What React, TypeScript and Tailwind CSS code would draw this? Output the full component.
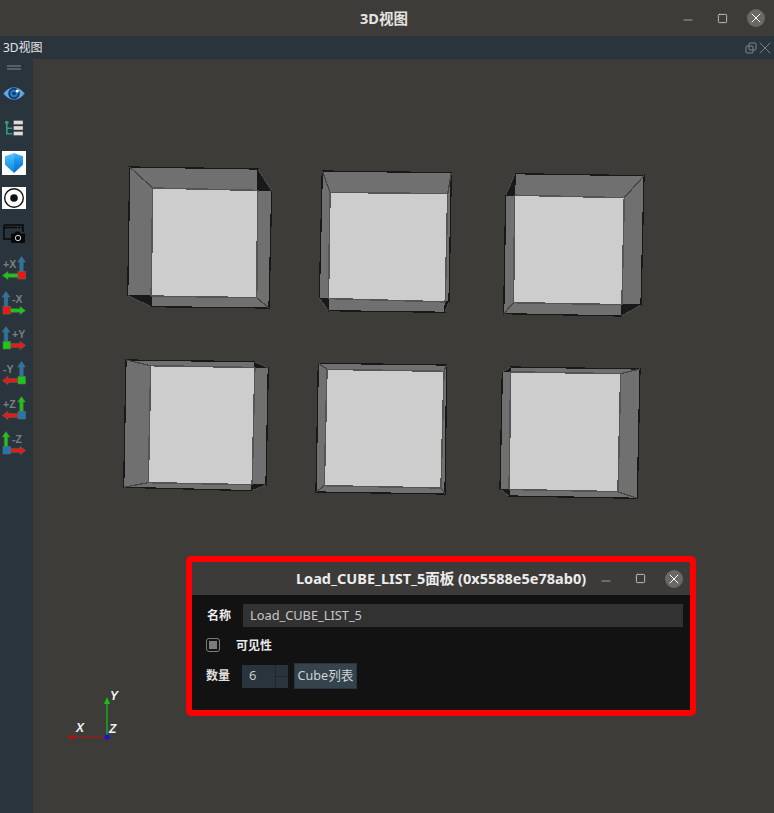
import { Minus, Square, X } from 'lucide-react';

type Pt = [number, number];

const cubes: { a: Pt[]; b: Pt[] }[] = [
  {
    a: [[129.7, 167], [258, 169], [256.7, 297.7], [127.7, 295.7]],
    b: [[152.7, 188], [271.7, 190.7], [269, 308], [151, 306.7]],
  },
  {
    a: [[322.3, 171], [451.3, 172.7], [449, 302], [319.3, 298.3]],
    b: [[330, 192.3], [447.7, 193.7], [445, 312.3], [328.3, 310.7]],
  },
  {
    a: [[515, 173.7], [644, 175.7], [641, 305], [513.5, 302.7]],
    b: [[505.7, 195], [624.3, 197.7], [621.7, 316], [503.7, 313.7]],
  },
  {
    a: [[126, 360], [255, 361.7], [252, 490.7], [123.7, 487.3]],
    b: [[150.7, 365.7], [268.3, 367.7], [266, 485], [148.3, 482.7]],
  },
  {
    a: [[318.3, 363.3], [446.7, 365], [445, 494], [316, 492]],
    b: [[327, 369.3], [444, 371.3], [441, 488], [324.3, 485.7]],
  },
  {
    a: [[510.7, 367], [640, 369], [637.3, 498.3], [509, 496]],
    b: [[502.3, 371.7], [620.7, 373.7], [618, 491.7], [500, 489.3]],
  },
];

const pts = (p: Pt[]) => p.map((q) => q.join(',')).join(' ');

const Cube = ({ a, b, id }: { a: Pt[]; b: Pt[]; id: number }) => (
  <g shapeRendering="crispEdges">
    <defs>
      <clipPath id={`clip-a-${id}`}>
        <polygon points={pts(a)} />
      </clipPath>
      <clipPath id={`clip-b-${id}`}>
        <polygon points={pts(b)} />
      </clipPath>
    </defs>
    {a.map((_, i) => {
      const j = (i + 1) % 4;
      return <polygon key={i} points={pts([a[i], a[j], b[j], b[i]])} fill="#191919" stroke="#191919" />;
    })}
    <polygon points={pts(a)} fill="#707070" />
    <polygon points={pts(b)} fill="#707070" />
    <polygon points={pts(a)} fill="none" stroke="#181818" strokeWidth="1.3" />
    <polygon points={pts(b)} fill="none" stroke="#181818" strokeWidth="1.3" />
    {a.map((q, i) => (
      <line key={i} x1={q[0]} y1={q[1]} x2={b[i][0]} y2={b[i][1]} stroke="#454545" strokeWidth="1.3" />
    ))}
    <polygon points={pts(a)} fill="#cdcdcd" clipPath={`url(#clip-b-${id})`} />
    <polygon points={pts(a)} fill="none" stroke="#555555" strokeWidth="1.5" clipPath={`url(#clip-b-${id})`} />
    <polygon points={pts(b)} fill="none" stroke="#555555" strokeWidth="1.5" clipPath={`url(#clip-a-${id})`} />
  </g>
);

const Scene = () => (
  <svg className="absolute left-0 top-0" width="741" height="754" viewBox="33 59 741 754">
    {cubes.map((c, i) => (
      <Cube key={i} a={c.a} b={c.b} id={i} />
    ))}
    <line x1="107" y1="737" x2="74" y2="737" stroke="#b01818" strokeWidth="1.2" />
    <polygon points="67,737 74,734 74,740" fill="#b01010" />
    <line x1="107" y1="737" x2="107" y2="704" stroke="#12c412" strokeWidth="1.2" />
    <polygon points="107,697 104,704 110,704" fill="#12c412" />
    <circle cx="107" cy="737" r="2.5" fill="#1414e0" />
    <g fill="#f2f2f2" fontSize="12" fontWeight="bold" fontStyle="italic" fontFamily="'Liberation Sans', sans-serif">
      <text x="76" y="732">X</text>
      <text x="110" y="700">Y</text>
      <text x="109" y="733">Z</text>
    </g>
  </svg>
);

const colors = { red: '#f01515', green: '#14cc14', blue: '#1f78b4' };

// mirror: square on the right and label on the left
const AxisIcon = ({
  label,
  up,
  side,
  box,
  right,
}: {
  label: string;
  up: string;
  side: string;
  box: string;
  right?: boolean;
}) => {
  const cx = right ? 6 : 21.5;
  const sq = right ? 3 : 18;
  const tip = right ? 25.5 : 2.5;
  const neck = right ? 20 : 8;
  const start = right ? 10 : 18;
  return (
    <svg width="28" height="24" viewBox="0 0 28 24">
      <g stroke="#6b6a55" strokeWidth="0.6">
        <polygon
          points={`${cx - 1.7},16 ${cx - 1.7},6 ${cx - 3.8},6 ${cx},0.5 ${cx + 3.8},6 ${cx + 1.7},6 ${cx + 1.7},16`}
          fill={up}
        />
        <polygon
          points={`${start},17.7 ${neck},17.7 ${neck},15.4 ${tip},19.5 ${neck},23.6 ${neck},21.3 ${start},21.3`}
          fill={side}
        />
        <rect x={sq} y="15.5" width="7.5" height="7.5" fill={box} />
      </g>
      <text
        x={right ? 12 : 3}
        y="12"
        fill="#7c8083"
        fontSize="10.5"
        fontWeight="bold"
        fontFamily="'Liberation Sans', sans-serif"
      >
        {label}
      </text>
    </svg>
  );
};

const EyeIcon = () => (
  <svg width="28" height="16" viewBox="0 0 28 16">
    <path d="M3 8.5C7 3.5 10.5 2 14 2s7 1.5 11 6.5C21 13.5 17.5 15 14 15S7 13.5 3 8.5Z" fill="#6aa6d8" stroke="#12304a" strokeWidth="0.8" />
    <circle cx="14" cy="8.5" r="5.8" fill="#123f73" />
    <circle cx="14" cy="8.5" r="3.8" fill="#2a7cc8" />
    <circle cx="14" cy="8.5" r="1.8" fill="#143a66" />
    <circle cx="17.3" cy="6" r="1.6" fill="#ffffff" />
  </svg>
);

const TreeIcon = () => (
  <svg width="28" height="18" viewBox="0 0 28 18">
    <circle cx="6.8" cy="3.6" r="1.9" fill="#2f9d84" />
    <path d="M6.8 4v10.8h5.4M6.8 9.3h5.4" fill="none" stroke="#2f9d84" strokeWidth="1.6" />
    <g fill="#dcdcdc" stroke="#3c4348" strokeWidth="0.4">
      <rect x="13.5" y="1.5" width="9.5" height="4" />
      <rect x="13.5" y="7" width="9.5" height="4" />
      <rect x="13.5" y="12.5" width="9.5" height="4" />
    </g>
  </svg>
);

const ShieldIcon = () => (
  <svg width="24" height="24" viewBox="0 0 24 24" className="bg-white">
    <defs>
      <linearGradient id="shield-left" x1="0" y1="0" x2="0" y2="1">
        <stop offset="0" stopColor="#6cc6f7" />
        <stop offset="0.35" stopColor="#35aef3" />
        <stop offset="1" stopColor="#0c86e2" />
      </linearGradient>
      <linearGradient id="shield-right" x1="0" y1="0" x2="0" y2="1">
        <stop offset="0" stopColor="#55b8f4" />
        <stop offset="0.35" stopColor="#1c98ea" />
        <stop offset="1" stopColor="#0a6cc4" />
      </linearGradient>
    </defs>
    <polygon points="3,5.3 12,2 12,22 3,13.7" fill="url(#shield-left)" />
    <polygon points="21,5.3 12,2 12,22 21,13.7" fill="url(#shield-right)" />
  </svg>
);

const TargetIcon = () => (
  <svg width="24" height="22" viewBox="0 0 24 22" className="bg-white">
    <circle cx="12" cy="11" r="9.3" fill="none" stroke="#111111" strokeWidth="1.4" />
    <circle cx="12" cy="11" r="3.8" fill="#111111" />
  </svg>
);

const CameraIcon = () => (
  <svg width="28" height="20" viewBox="0 0 28 20">
    <path d="M4 2h19v7M4 2v14h7" fill="none" stroke="#0a0a0a" strokeWidth="1.6" />
    <path d="M4 4.5h19" stroke="#0a0a0a" strokeWidth="1.6" strokeDasharray="13 1 2 1 2 1" />
    <path d="M11 10.5h3.5l1-2h4l1 2H25V20H11Z" fill="#0a0a0a" />
    <circle cx="18" cy="15" r="2.7" fill="none" stroke="#d0d0d0" strokeWidth="1" />
  </svg>
);

const toolbar = [
  <EyeIcon key="eye" />,
  <TreeIcon key="tree" />,
  <ShieldIcon key="shield" />,
  <TargetIcon key="target" />,
  <CameraIcon key="camera" />,
  <AxisIcon key="+x" label="+X" up={colors.blue} side={colors.green} box={colors.red} />,
  <AxisIcon key="-x" label="-X" up={colors.blue} side={colors.green} box={colors.red} right />,
  <AxisIcon key="+y" label="+Y" up={colors.blue} side={colors.red} box={colors.green} right />,
  <AxisIcon key="-y" label="-Y" up={colors.blue} side={colors.red} box={colors.green} />,
  <AxisIcon key="+z" label="+Z" up={colors.green} side={colors.red} box={colors.blue} />,
  <AxisIcon key="-z" label="-Z" up={colors.green} side={colors.red} box={colors.blue} right />,
];

const WindowButtons = () => (
  <>
    <div className="flex w-[34px] justify-center">
      <Minus className="mt-[4px] h-[14px] w-[14px] text-[#b5b3b0]" strokeWidth={1.4} />
    </div>
    <div className="flex w-[34px] justify-center">
      <Square className="h-[11px] w-[11px] text-[#c9c7c4]" strokeWidth={2} />
    </div>
    <div className="flex w-[34px] justify-center">
      <div className="flex h-[18px] w-[18px] items-center justify-center rounded-full bg-[#6a6865]">
        <X className="h-[16px] w-[16px] text-white" strokeWidth={1.5} />
      </div>
    </div>
  </>
);

const Panel = () => (
  <div className="absolute left-[153px] top-[497px] h-[160px] w-[510px] overflow-hidden rounded-[5px] border-[6px] border-[#ff0000] bg-[#121212]">
    <div className="relative -mr-px flex h-[33px] items-center justify-end bg-[#3d3b39]">
      <span className="absolute left-[104px] top-[7px] text-[14.5px] font-bold leading-[18px] text-[#ececec]">
        Load_CUBE_LIST_5面板 (0x5588e5e78ab0)
      </span>
      <WindowButtons />
    </div>
    <div className="flex flex-col gap-[11px] pl-[14px] pr-[7px] pt-[9px] text-[#d4d4d4]">
      <div className="flex h-[23px] items-center">
        <span className="w-[37px] pl-px text-[12px] font-bold text-[#eeeeee]">名称</span>
        <div className="flex h-[23px] flex-1 items-center bg-[#323232] pl-[7px] text-[12.8px] text-[#c8c8c8]">
          Load_CUBE_LIST_5
        </div>
      </div>
      <div className="flex h-[14px] items-center">
        <div className="flex h-[14px] w-[14px] items-center justify-center rounded-[3px] border border-[#7c7c7c]">
          <div className="h-[8px] w-[8px] bg-[#7c7c7c]" />
        </div>
        <span className="ml-[16px] pt-px text-[12px] font-bold text-[#e8e8e8]">可见性</span>
      </div>
      <div className="flex h-[26px] items-center">
        <span className="w-[36px] text-[12px] font-bold text-[#e0e0e0]">数量</span>
        <div className="flex h-[23px] w-[46px] items-center justify-between bg-[#29343c] pl-[7px] text-[13px] text-[#c8c8c8]">
          6
          <div className="flex h-full w-[13px] flex-col border-l border-[#1f272d]">
            <div className="flex-1 border-b border-[#1f272d]" />
            <div className="flex-1" />
          </div>
        </div>
        <div className="ml-[6px] flex h-[26px] w-[63px] items-center justify-center border border-[#29343c] bg-[#34434c] text-[12.6px] text-[#cfd3d5]">
          Cube列表
        </div>
      </div>
    </div>
  </div>
);

const App = () => (
  <div className="flex h-[813px] w-[774px] flex-col overflow-hidden bg-[#3d3c38] font-['Noto_Sans','Noto_Sans_CJK_SC',sans-serif]">
    <header className="relative flex h-[36px] items-center justify-end pr-px">
      <span className="absolute left-[360px] top-[8px] text-[14.5px] font-bold leading-[20px] text-[#e6e4e2]">3D视图</span>
      <WindowButtons />
    </header>
    <div className="flex h-[23px] items-center justify-between bg-[#29343c] pl-[3px] pr-[2px] pt-px text-[12px] text-[#e4e6e7]">
      <span>3D视图</span>
      <div className="flex items-center gap-[1px] text-[#7d878c]">
        <svg width="12" height="12" viewBox="0 0 12 12" fill="none" stroke="currentColor" strokeWidth="1">
          <rect x="4" y="1" width="7" height="7" rx="1" />
          <rect x="1" y="4" width="7" height="7" rx="1" />
        </svg>
        <X className="h-[20px] w-[20px] -mx-[3px]" strokeWidth={1.1} />
      </div>
    </div>
    <div className="flex flex-1">
      <aside className="flex w-[33px] flex-col bg-[#29343c]">
        <div className="flex h-[16px] flex-col items-start justify-center gap-px pl-[7px]">
          <div className="h-[2px] w-[14px] bg-[#566068]" />
          <div className="h-[2px] w-[14px] bg-[#566068]" />
        </div>
        {toolbar.map((icon, i) => (
          <div key={i} className={`flex h-[35px] items-center ${i === 2 || i === 3 ? 'pl-[2px]' : ''}`}>
            {icon}
          </div>
        ))}
      </aside>
      <main className="relative flex-1 bg-[#3d3c38]">
        <Scene />
        <Panel />
      </main>
    </div>
  </div>
);

export default App;
